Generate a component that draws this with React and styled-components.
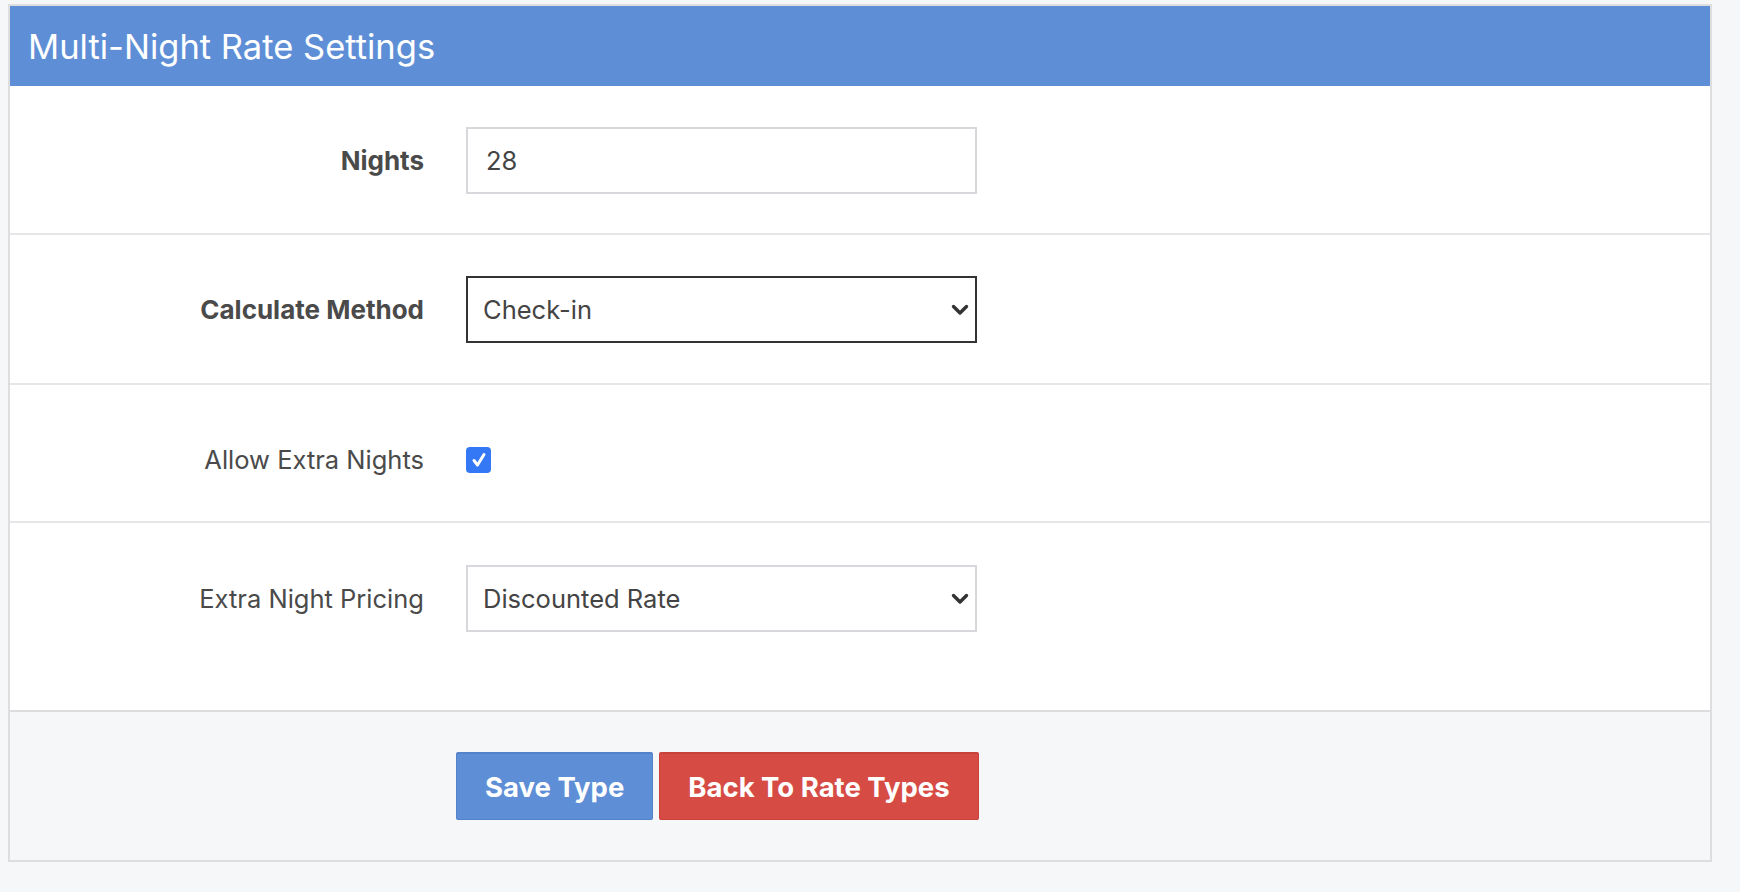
import React from "react";
import styled, { createGlobalStyle } from "styled-components";

const Global = createGlobalStyle`
  html, body { margin: 0; padding: 0; }
  body {
    background: #f6f7f9;
    font-family: Inter, Roboto, "Helvetica Neue", Arial, sans-serif;
    color: #4a4a4a;
  }
  * { box-sizing: border-box; }
`;

const Page = styled.div`
  padding: 4px 28px 0 8px;
  min-height: 892px;
`;

const Card = styled.section`
  border: 2px solid #dedee1;
  background: #fff;
`;

const Header = styled.header`
  height: 80px;
  background: #5e8fd6;
  display: flex;
  align-items: center;
  padding-left: 18px;
`;

const Title = styled.h2`
  margin: 0;
  font-weight: 400;
  font-size: 34.5px;
  color: #fff;
`;

const Row = styled.div`
  display: grid;
  grid-template-columns: 414px 511px;
  column-gap: 42px;
  align-items: center;
  padding-top: ${(p) => p.$top}px;
  padding-bottom: ${(p) => p.$bottom}px;
  border-bottom: ${(p) => (p.$last ? "none" : "2px solid #e6e6e8")};
`;

const Label = styled.label`
  text-align: right;
  font-size: ${(p) => (p.$bold ? "26px" : "25.5px")};
  line-height: ${(p) => p.$lh || "normal"};
  font-weight: ${(p) => (p.$bold ? 700 : 400)};
  color: #4a4a4a;
`;

const TextInput = styled.input`
  height: 67px;
  width: 100%;
  border: 2px solid #d8d8dc;
  padding: 0 18px;
  font: inherit;
  font-size: 25.5px;
  color: #444;
  background: #fff;
  outline: none;
`;

const SelectWrap = styled.div`
  position: relative;
  width: 100%;
`;

const Select = styled.select`
  appearance: none;
  -webkit-appearance: none;
  height: 67px;
  width: 100%;
  border: 2px solid ${(p) => (p.$focused ? "#333" : "#d8d8dc")};
  border-radius: 0;
  padding: 0 40px 0 15px;
  font: inherit;
  font-size: 25.5px;
  color: #444;
  background: #fff;
  outline: none;
`;

const Chevron = styled.svg`
  position: absolute;
  right: 8px;
  top: 50%;
  transform: translateY(-50%);
  width: 18px;
  height: 12px;
  pointer-events: none;
`;

const CheckBox = styled.span`
  width: 25px;
  height: 26px;
  border-radius: 4px;
  background: #3478f6;
  display: inline-flex;
  align-items: center;
  justify-content: center;
  vertical-align: middle;
`;

const Footer = styled.div`
  background: #f6f7f9;
  border-top: 2px solid #dcdcdf;
  padding: 40px 0 40px 446px;
  display: flex;
  gap: 6px;
`;

const Button = styled.button`
  height: 68px;
  padding: 0 28px;
  border: 1px solid ${(p) => (p.$danger ? "#c8413b" : "#5482c9")};
  border-top-width: 2px;
  border-radius: 2px;
  background: ${(p) => (p.$danger ? "#d64c45" : "#5e8fd6")};
  color: #fff;
  font-family: Inter, Roboto, "Helvetica Neue", Arial, sans-serif;
  font-weight: 700;
  font-size: 27.5px;
  cursor: pointer;
`;

function DropDown({ value, options, focused }) {
  return (
    <SelectWrap>
      <Select $focused={focused} defaultValue={value}>
        {options.map((o) => (
          <option key={o}>{o}</option>
        ))}
      </Select>
      <Chevron viewBox="0 0 18 12">
        <path d="M2.5 2.5 L9 9 L15.5 2.5" fill="none" stroke="#333" strokeWidth="3.4" strokeLinecap="round" strokeLinejoin="round" />
      </Chevron>
    </SelectWrap>
  );
}

export default function App() {
  return (
    <>
      <Global />
      <Page>
        <Card>
          <Header>
            <Title>Multi-Night Rate Settings</Title>
          </Header>
          <Row $top={41} $bottom={39}>
            <Label $bold>Nights</Label>
            <TextInput defaultValue="28" />
          </Row>
          <Row $top={41} $bottom={40}>
            <Label $bold>Calculate Method</Label>
            <DropDown value="Check-in" options={["Check-in", "Check-out"]} focused />
          </Row>
          <Row $top={47} $bottom={33}>
            <Label $lh="56px">Allow Extra Nights</Label>
            <div>
              <CheckBox role="checkbox" aria-checked="true">
                <svg width="18" height="18" viewBox="0 0 18 18">
                  <path d="M4 9.5 L7.5 14 L14 3.5" fill="none" stroke="#fff" strokeWidth="3" strokeLinecap="round" strokeLinejoin="round" />
                </svg>
              </CheckBox>
            </div>
          </Row>
          <Row $top={42} $bottom={78} $last>
            <Label>Extra Night Pricing</Label>
            <DropDown value="Discounted Rate" options={["Discounted Rate", "Standard Rate"]} />
          </Row>
          <Footer>
            <Button>Save Type</Button>
            <Button $danger>Back To Rate Types</Button>
          </Footer>
        </Card>
      </Page>
    </>
  );
}
